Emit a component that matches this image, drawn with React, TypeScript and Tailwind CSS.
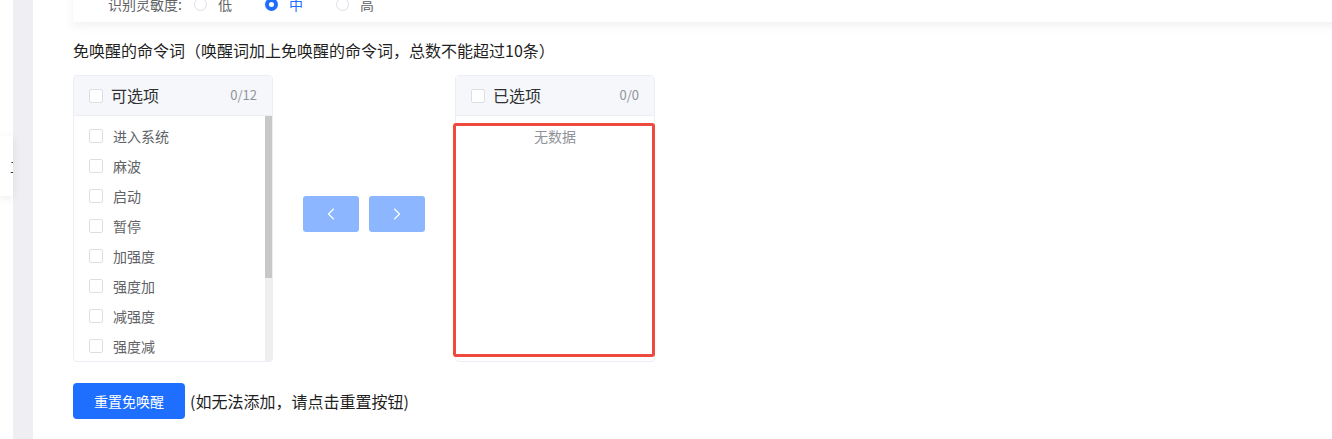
import React, { FC } from "react";
import { ChevronLeft, ChevronRight } from "lucide-react";

const options = ["进入系统", "麻波", "启动", "暂停", "加强度", "强度加", "减强度", "强度减", "减少", "增加", "停止", "继续"];

const Checkbox: FC = (): JSX.Element => (
  <span className="w-[14px] h-[14px] shrink-0 rounded-[2px] border border-[#dcdfe6] bg-white" />
);

const Radio: FC<{ label: string; checked?: boolean }> = ({ label, checked }): JSX.Element => (
  <div className="flex items-center gap-[11px] mr-[33px]">
    {checked ? (
      <span className="w-[13px] h-[13px] rounded-full bg-[#1e6fff] flex items-center justify-center">
        <span className="w-[5px] h-[5px] rounded-full bg-white" />
      </span>
    ) : (
      <span className="w-[13px] h-[13px] rounded-full border border-[#dcdfe6] bg-white" />
    )}
    <span className={checked ? "text-[#1e6fff]" : "text-[#606266]"}>{label}</span>
  </div>
);

const PanelHeader: FC<{ title: string; count: string }> = ({ title, count }): JSX.Element => (
  <div className="h-[40px] bg-[#f5f7fa] border-b border-[#ebeef5] flex items-center px-[15px]">
    <Checkbox />
    <span className="ml-[8px] mb-[2px] text-[16px] text-[#303133]">{title}</span>
    <span className="ml-auto mb-[1px] text-[13px] text-[#909399]">{count}</span>
  </div>
);

const App: FC = (): JSX.Element => {
  return (
    <div className="w-[1332px] h-[439px] overflow-hidden flex bg-white font-['Noto_Sans_CJK_SC',sans-serif]">
      {/* left edge with floating card */}
      <div className="w-[13px] shrink-0 relative z-10">
        <div className="mt-[136px] h-[60px] bg-white shadow-[0_2px_10px_rgba(0,0,0,0.08)] overflow-hidden flex items-center justify-end">
          <span className="text-[14px] text-[#303133] mr-[-11px]">工</span>
        </div>
      </div>
      <div className="w-[20px] shrink-0 bg-[#eeeef3]" />

      {/* main content */}
      <div className="flex-1 pl-[40px]">
        {/* sensitivity card */}
        <div className="-mt-[14px] h-[36px] mr-[-20px] bg-white shadow-[0_4px_10px_rgba(0,0,0,0.06)] flex items-center pl-[35px] text-[14px]">
          <span className="text-[#606266] mr-[12px]">识别灵敏度:</span>
          <Radio label="低" />
          <Radio label="中" checked />
          <Radio label="高" />
        </div>

        <div className="mt-[16px] leading-[24px] text-[16px] text-[#1f1f1f]">
          免唤醒的命令词（唤醒词加上免唤醒的命令词，总数不能超过10条）
        </div>

        {/* transfer */}
        <div className="mt-[13px] flex items-start">
          <div className="w-[200px] h-[287px] border border-[#ebeef5] rounded-[4px] overflow-hidden flex flex-col">
            <PanelHeader title="可选项" count="0/12" />
            <div className="relative flex-1 overflow-hidden">
              <div className="pt-[5px]">
                {options.map((item, index) => (
                  <div key={index} className="h-[30px] flex items-center pl-[15px]">
                    <Checkbox />
                    <span className="ml-[10px] text-[14px] text-[#606266]">{item}</span>
                  </div>
                ))}
              </div>
              <div className="absolute right-0 top-0 bottom-0 w-[7px] bg-[#efefef]">
                <div className="h-[162px] bg-[#c8c8c8]" />
              </div>
            </div>
          </div>

          <div className="mx-[30px] mt-[121px] flex gap-[10px]">
            <button className="w-[56px] h-[36px] rounded-[3px] bg-[#8cb6ff] flex items-center justify-center">
              <ChevronLeft size={20} strokeWidth={1.4} color="#ffffff" />
            </button>
            <button className="w-[56px] h-[36px] rounded-[3px] bg-[#8cb6ff] flex items-center justify-center">
              <ChevronRight size={20} strokeWidth={1.4} color="#ffffff" />
            </button>
          </div>

          <div className="relative w-[200px] h-[287px] border border-[#ebeef5] rounded-[4px] flex flex-col">
            <PanelHeader title="已选项" count="0/0" />
            <div className="pt-[5px] h-[35px] leading-[30px] text-center text-[14px] text-[#909399]">无数据</div>
            {/* highlight overlay */}
            <div className="absolute left-[-3px] top-[47px] w-[202px] h-[234px] border-[3px] border-[#ef4a3e] rounded-[3px]" />
          </div>
        </div>

        {/* reset */}
        <div className="mt-[21px] flex items-center">
          <button className="w-[112px] h-[36px] rounded-[4px] bg-[#1e6fff] text-white text-[14px] leading-[36px]">重置免唤醒</button>
          <span className="ml-[5px] text-[16px] text-[#1f1f1f]">(如无法添加，请点击重置按钮)</span>
        </div>
      </div>
    </div>
  );
};

export default App;
